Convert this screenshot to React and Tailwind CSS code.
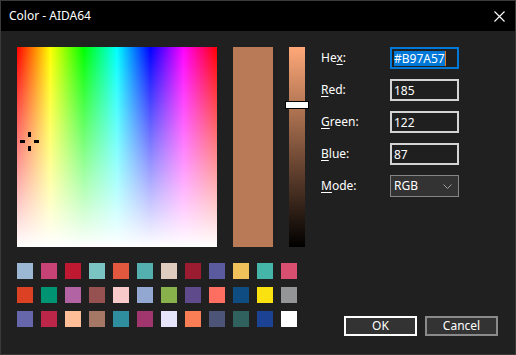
import React from 'react';

const swatches = [
  '#9bb7d4', '#c74375', '#bf1932', '#7bc4c4', '#e2583e', '#53b0ae', '#decdbe', '#9b1b30', '#5a5b9f', '#f0c05a', '#45b5aa', '#d94f70',
  '#dd4124', '#009473', '#b163a3', '#955251', '#f7cac9', '#92a8d1', '#88b04b', '#5f4b8b', '#ff6f61', '#0f4c81', '#f9e20f', '#939597',
  '#6667ab', '#bb2649', '#ffbe98', '#a47864', '#2e8e9e', '#a1356d', '#e6e6fa', '#f97e56', '#4c5577', '#31615f', '#1b4293', '#ffffff',
];

function Field({ label, ul, rest, value, focused }) {
  return (
    <div className="flex items-center h-[22px]">
      <label className="w-[69px] text-[12px] text-white leading-none">
        {label}<u className="underline-offset-2">{ul}</u>{rest}
      </label>
      <div
        className={
          'w-[69px] h-[22px] border-2 flex items-center px-[2px] text-[12px] text-white bg-[#1f1f1f] ' +
          (focused ? 'border-[#0078d7]' : 'border-[#d4d4d4]')
        }
      >
        {focused ? (
          <>
            <span className="bg-[#0078d7] leading-[15px]">{value}</span>
            <span className="w-px h-[15px] bg-[#e07a20]" />
          </>
        ) : (
          <span className="leading-[15px]">{value}</span>
        )}
      </div>
    </div>
  );
}

export default function App() {
  return (
    <div
      className="w-[516px] h-[355px] bg-[#202020] border border-[#3a3a3a] flex flex-col select-none"
      style={{ fontFamily: '"Noto Sans", "Open Sans", sans-serif' }}
    >
      {/* title bar */}
      <div className="h-[30px] bg-black flex items-center justify-between pl-[8px] pr-[10px]">
        <span className="text-[12px] text-white">Color - AIDA64</span>
        <svg width="11" height="11" viewBox="0 0 11 11" stroke="white" strokeWidth="1.1">
          <path d="M0.5 0.5 L10.5 10.5 M10.5 0.5 L0.5 10.5" />
        </svg>
      </div>

      <div className="flex-1 flex pt-[16px] pb-[18px] pl-[16px]">
        {/* left side */}
        <div className="flex flex-col gap-[16px]">
          <div className="flex gap-[16px]">
            <div className="relative w-[200px] h-[200px] bg-[linear-gradient(to_right,#ff0000_0%,#ffff00_16.67%,#00ff00_33.33%,#00ffff_50%,#0000ff_66.67%,#ff00ff_83.33%,#ff0000_100%)]">
              <div className="absolute inset-0 bg-[linear-gradient(to_bottom,rgba(255,255,255,0)_0%,#ffffff_100%)]" />
              <div className="absolute left-[11px] top-[85px] w-[3px] h-[5px] bg-black" />
              <div className="absolute left-[11px] top-[99px] w-[3px] h-[5px] bg-black" />
              <div className="absolute left-[3px] top-[93px] w-[5px] h-[3px] bg-black" />
              <div className="absolute left-[17px] top-[93px] w-[5px] h-[3px] bg-black" />
            </div>
            <div className="w-[40px] h-[200px] bg-[#b97a57]" />
            <div className="relative w-[16px] h-[200px] bg-[linear-gradient(to_bottom,#ffa878,#000000)]">
              <div className="absolute left-[-4px] top-[54px] w-[24px] h-[8px] bg-white border border-black" />
            </div>
          </div>
          <div className="grid grid-cols-[repeat(12,16px)] gap-[8px]">
            {swatches.map((c, i) => (
              <div key={i} className="w-[16px] h-[16px]" style={{ backgroundColor: c }} />
            ))}
          </div>
        </div>

        {/* right side */}
        <div className="flex-1 flex flex-col pl-[16px]">
          <div className="flex flex-col gap-[10px]">
            <Field label="He" ul="x" rest=":" value="#B97A57" focused />
            <Field label="" ul="R" rest="ed:" value="185" />
            <Field label="" ul="G" rest="reen:" value="122" />
            <Field label="" ul="B" rest="lue:" value="87" />
            <div className="flex items-center h-[22px]">
              <label className="w-[69px] text-[12px] text-white leading-none">
                <u className="underline-offset-2">M</u>ode:
              </label>
              <div className="w-[69px] h-[22px] border border-[#858585] bg-[#333333] flex items-center justify-between pl-[3px] pr-[6px] text-[12px] text-white">
                <span>RGB</span>
                <svg width="9" height="5" viewBox="0 0 9 5" fill="none" stroke="#a0a0a0" strokeWidth="1">
                  <path d="M0.5 0.5 L4.5 4.5 L8.5 0.5" />
                </svg>
              </div>
            </div>
          </div>

          <div className="mt-auto flex justify-end gap-[8px] pr-[17px]">
            <button className="w-[73px] h-[20px] border-2 border-white bg-[#333333] text-white text-[12px] leading-none">
              OK
            </button>
            <button className="w-[73px] h-[20px] border-2 border-[#8a8a8a] bg-[#333333] text-white text-[12px] leading-none">
              Cancel
            </button>
          </div>
        </div>
      </div>
    </div>
  );
}
